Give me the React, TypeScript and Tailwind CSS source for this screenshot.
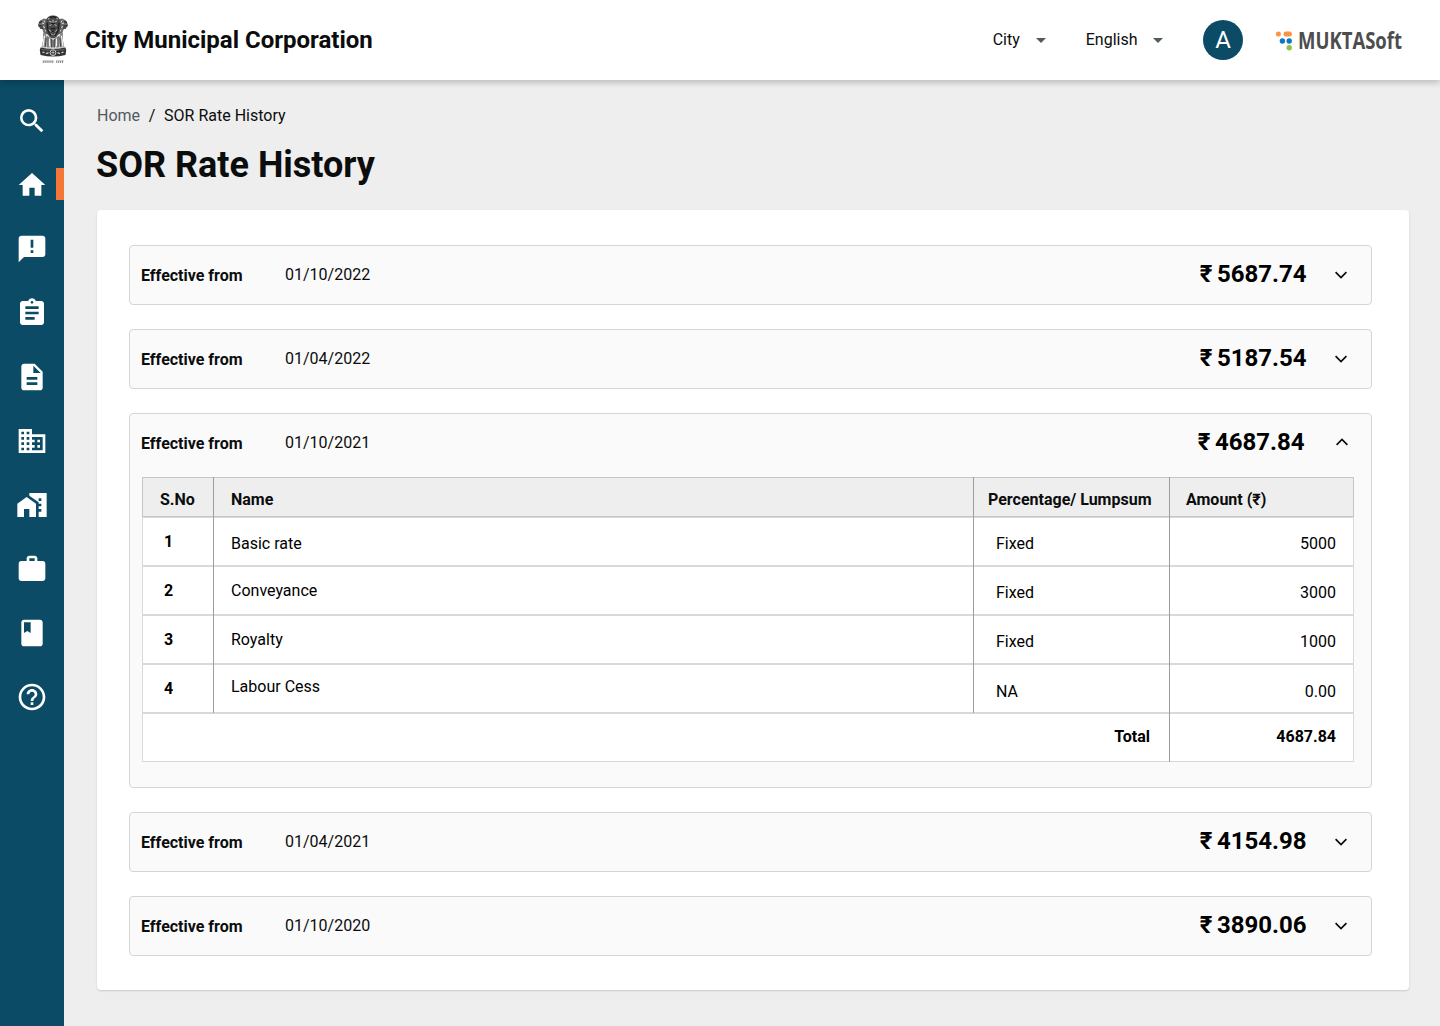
import type { ReactNode } from "react";
import {
  MdSearch,
  MdHome,
  MdAnnouncement,
  MdAssignment,
  MdDescription,
  MdDomain,
  MdHomeWork,
  MdWork,
  MdBook,
  MdHelpOutline,
} from "react-icons/md";

const NAV = [
  { icon: MdSearch, label: "Search" },
  { icon: MdHome, label: "Home", active: true },
  { icon: MdAnnouncement, label: "Complaints" },
  { icon: MdAssignment, label: "Assignments" },
  { icon: MdDescription, label: "Documents" },
  { icon: MdDomain, label: "Organisation" },
  { icon: MdHomeWork, label: "Property" },
  { icon: MdWork, label: "Works" },
  { icon: MdBook, label: "Register" },
  { icon: MdHelpOutline, label: "Help" },
];

const ROWS = [
  { no: "1", name: "Basic rate", kind: "Fixed", amount: "5000", namePad: "pt-[14px]", valuePad: "pt-[14px]" },
  { no: "2", name: "Conveyance", kind: "Fixed", amount: "3000", namePad: "pt-[12px]", valuePad: "pt-[14px]" },
  { no: "3", name: "Royalty", kind: "Fixed", amount: "1000", namePad: "pt-[12px]", valuePad: "pt-[14px]" },
  { no: "4", name: "Labour Cess", kind: "NA", amount: "0.00", namePad: "pt-[10px]", valuePad: "pt-[15px]" },
];

function Emblem() {
  return (
    <svg width="32" height="50" viewBox="0 -0.600 32 50" aria-hidden="true">
      {/* side lions */}
      <path d="M1 9l2-4 4-2 4 1v15l-4-1-2-5-3-1z" fill="#6a6a6a" />
      <path d="M31 9l-2-4-4-2-4 1v15l4-1 2-5 3-1z" fill="#6a6a6a" />
      <path d="M2 7l3-1M1.500 10l4 .5M3 12.500l3 0M30 7l-3-1M30.500 10l-4 .5M29 12.500l-3 0" stroke="#2b2b2b" strokeWidth="1.300" />
      <path d="M5 7.500l2 .5M7 5l1 2M6 11l2 1M8 14l1 2M27 7.500l-2 .5M25 5l-1 2M26 11l-2 1M24 14l-1 2" stroke="#e6e6e6" strokeWidth=".9" />
      {/* centre lion */}
      <path d="M9 5c1-4 4-5 7-5s6 1 7 5l1 7-2 6-3 4-3 1-3-1-3-4-2-6z" fill="#4a4a4a" />
      <path d="M10 7l1 8 3 5M22 7l-1 8-3 5M13 2l3-1 3 1M14 8h4M13.500 13h5M15 15.500h2" stroke="#1c1c1c" strokeWidth="1.200" fill="none" />
      <path d="M12 5.500l2.500 1M20 5.500l-2.500 1M12.500 10l2-1M19.500 10l-2-1M12 14l1.500 2M20 14l-1.500 2M16 4v3M14 18l1.500 1.500M18 18l-1.500 1.500M11 3.500l1.500-.5M21 3.500l-1.500-.5" stroke="#cfcfcf" strokeWidth=".9" />
      {/* legs */}
      <path d="M6 17l3 1 1 5-1 9H4.500L6 25zM26 17l-3 1-1 5 1 9h4.500L26 25z" fill="#8b8b8b" />
      <path d="M10 20l4 3-.5 9H9.500zM22 20l-4 3 .5 9h4zM15 24h2v8h-2z" fill="#777" />
      <path d="M6 31l1.500-11M12.500 23v8M19.500 23v8M26 31l-1.500-11" stroke="#f4f4f4" strokeWidth="1.200" />
      <path d="M9 22l-.5 9M14.500 23v9M17.500 23v9M23 22l.5 9" stroke="#3a3a3a" strokeWidth=".9" />
      {/* abacus with wheel */}
      <path d="M3.500 32q12.500 2.500 25 0l.7 2.500-.7 5q-12.500 3-25 0l-.7-5z" fill="#333" />
      <circle cx="16" cy="37" r="2.900" fill="#333" stroke="#e2e2e2" strokeWidth=".9" />
      <path d="M16 35.200v3.600M14.200 37h3.600" stroke="#e2e2e2" strokeWidth=".6" />
      <path d="M5.500 36.500l2 .5M9 38l2.500-1M20.500 37l2.500 1M24.500 37l2-.5" stroke="#d0d0d0" strokeWidth="1.300" />
      <path d="M4.500 34q11.500 2 23 0" stroke="#999" strokeWidth=".5" fill="none" />
      {/* motto */}
      <path d="M5.500 45.200h11M19 45.200h8" stroke="#8a8a8a" strokeWidth=".6" />
      <path d="M5.800 46.500h10.500M19.300 46.500h7.500" stroke="#808080" strokeWidth="2" strokeDasharray="1 .9" />
    </svg>
  );
}

function Logo() {
  return (
    <svg width="128" height="40" viewBox="0 -6 128 40" aria-label="MUKTASoft" className="overflow-visible">
      <circle cx="3.400" cy="8" r="2.500" fill="#fa9441" />
      <rect x="8.500" y="5.500" width="8.400" height="5" rx="2.500" fill="#fa9441" />
      <circle cx="7.400" cy="15" r="2.700" fill="#0d77c2" />
      <circle cx="14.200" cy="15" r="2.700" fill="#0d77c2" />
      <circle cx="14.200" cy="21.800" r="2.700" fill="#8cc63f" />
      <text
        x="23"
        y="23"
        textLength="104"
        lengthAdjust="spacingAndGlyphs"
        fill="#4d4d4d"
        className="font-['Open_Sans'] text-[24px] font-bold"
      >
        MUKTASoft
      </text>
    </svg>
  );
}

function Caret() {
  return (
    <svg width="10" height="5" viewBox="0 0 10 5" aria-hidden="true">
      <path d="M0 0h10L5 5z" fill="#505a5f" />
    </svg>
  );
}

function Chevron({ open }: { open?: boolean }) {
  return (
    <svg width="12" height="8" viewBox="0 0 12 8" aria-hidden="true" className={open ? "mb-[2px]" : ""}>
      <path
        d={open ? "M0.600 6.800L6 1.400l5.400 5.400" : "M0.600 1.200L6 6.600l5.400-5.400"}
        fill="none"
        stroke="#0b0c0c"
        strokeWidth="1.700"
      />
    </svg>
  );
}

function Rate({ date, amount, open, children }: { date: string; amount: string; open?: boolean; children?: ReactNode }) {
  return (
    <section
      className={
        open
          ? "h-[375px] rounded-[4px] border border-[#d6d5d4] bg-[#fafafa]"
          : "h-[60px] rounded-[4px] border border-[#d6d5d4] bg-[#fafafa]"
      }
    >
      <div className="flex h-[58px] items-center pl-[11px]">
        <span className="w-36 pt-[2px] font-bold leading-5">Effective from</span>
        <span className="leading-5">{date}</span>
        <span
          className={
            open
              ? "mr-[31.500px] ml-auto flex items-baseline gap-[4.500px] pb-[2px] text-2xl font-bold text-black"
              : "mr-[28.500px] ml-auto flex items-baseline gap-[4.500px] pb-[2px] text-2xl font-bold text-black"
          }
        >
          <span>₹</span>
          <span>{amount}</span>
        </span>
        <span className={open ? "mr-[23px]" : "mr-[24px]"}>
          <Chevron open={open} />
        </span>
      </div>
      {children}
    </section>
  );
}

function Cell({ children, className, last }: { children?: ReactNode; className: string; last?: boolean }) {
  return (
    <div className={last ? "" : "border-r border-[#9d9d9d]"}>
      <div className={className}>{children}</div>
    </div>
  );
}

function RateTable() {
  return (
    <div className="mt-[5px] ml-3 w-[1212px] leading-6 text-black">
      <div className="grid h-10 grid-cols-[72px_760px_196px_184px] bg-[#eeeeee] font-bold text-[#0b0c0c]">
        <Cell className="h-full border-y border-l border-[#c6c6c6] pt-[10px] pl-[17px]">S.No</Cell>
        <Cell className="h-full border-y border-[#c6c6c6] pt-[10px] pl-[17px]">Name</Cell>
        <Cell className="h-full border-y border-[#c6c6c6] pt-[10px] pl-[14px]">Percentage/ Lumpsum</Cell>
        <Cell last className="h-full border-y border-r border-[#c6c6c6] pt-[10px] pl-[16px]">
          Amount (₹)
        </Cell>
      </div>
      {ROWS.map((r) => (
        <div key={r.no} className="grid h-[49px] grid-cols-[72px_760px_196px_184px] bg-white">
          <Cell className="h-full border-y border-l border-[#d9d9d9] pt-[12px] pl-[21px] font-bold">{r.no}</Cell>
          <Cell className="h-full border-y border-[#d9d9d9] pl-[17px]">
            <div className={r.namePad}>{r.name}</div>
          </Cell>
          <Cell className="h-full border-y border-[#d9d9d9] pl-[22px]">
            <div className={r.valuePad}>{r.kind}</div>
          </Cell>
          <Cell last className="h-full border-y border-r border-[#d9d9d9] pr-[17px] text-right">
            <div className={r.valuePad}>{r.amount}</div>
          </Cell>
        </div>
      ))}
      <div className="grid h-[49px] grid-cols-[1028px_184px] bg-white font-bold">
        <Cell className="h-full border-y border-l border-[#d9d9d9] pt-[11px] pr-[19px] text-right">Total</Cell>
        <Cell last className="h-full border-y border-r border-[#d9d9d9] pt-[11px] pr-[17px] text-right">
          4687.84
        </Cell>
      </div>
    </div>
  );
}

export default function App() {
  return (
    <div className="flex h-[1026px] w-[1440px] flex-col overflow-hidden bg-[#eeeeee] font-[Roboto,sans-serif] text-base text-[#0b0c0c]">
      <header className="z-10 flex h-20 shrink-0 items-center bg-white pl-[37px] shadow-[0_3px_6px_rgba(0,0,0,0.2)]">
        <Emblem />
        <h1 className="ml-4 text-2xl font-bold leading-7">City Municipal Corporation</h1>
        <div className="mr-[37px] ml-auto flex items-center">
          <span>City</span>
          <span className="mr-[39.500px] ml-[16.500px]">
            <Caret />
          </span>
          <span>English</span>
          <span className="mr-10 ml-[15.500px]">
            <Caret />
          </span>
          <span className="mr-8 flex size-10 items-center justify-center rounded-full bg-[#0b4b66] text-2xl text-white">
            A
          </span>
          <Logo />
        </div>
      </header>
      <div className="flex min-h-0 flex-1">
        <nav className="w-16 shrink-0 bg-[#0b4b66] pt-[8px]">
          {NAV.map(({ icon: Icon, label, active }) => (
            <a key={label} aria-label={label} className="flex h-16 items-center pl-4 text-white">
              <Icon className="mt-[1.600px] size-8 shrink-0" />
              {active && <span className="ml-auto h-8 w-2 bg-[#f47738]" />}
            </a>
          ))}
        </nav>
        <main className="flex-1 pt-6 pl-[33px]">
          <div className="flex gap-[8.700px] leading-6">
            <span className="text-[#505a5f]">Home</span>
            <span>/</span>
            <span>SOR Rate History</span>
          </div>
          <h2 className="-ml-px mt-[16px] text-[36px] font-bold leading-[42px]">SOR Rate History</h2>
          <div className="mt-6 flex h-[780px] w-[1312px] flex-col gap-6 rounded-[4px] bg-white pt-[35px] pr-[37px] pl-8 shadow-[0_1px_2px_rgba(0,0,0,0.16)]">
            <Rate date="01/10/2022" amount="5687.74" />
            <Rate date="01/04/2022" amount="5187.54" />
            <Rate date="01/10/2021" amount="4687.84" open>
              <RateTable />
            </Rate>
            <Rate date="01/04/2021" amount="4154.98" />
            <Rate date="01/10/2020" amount="3890.06" />
          </div>
        </main>
      </div>
    </div>
  );
}
